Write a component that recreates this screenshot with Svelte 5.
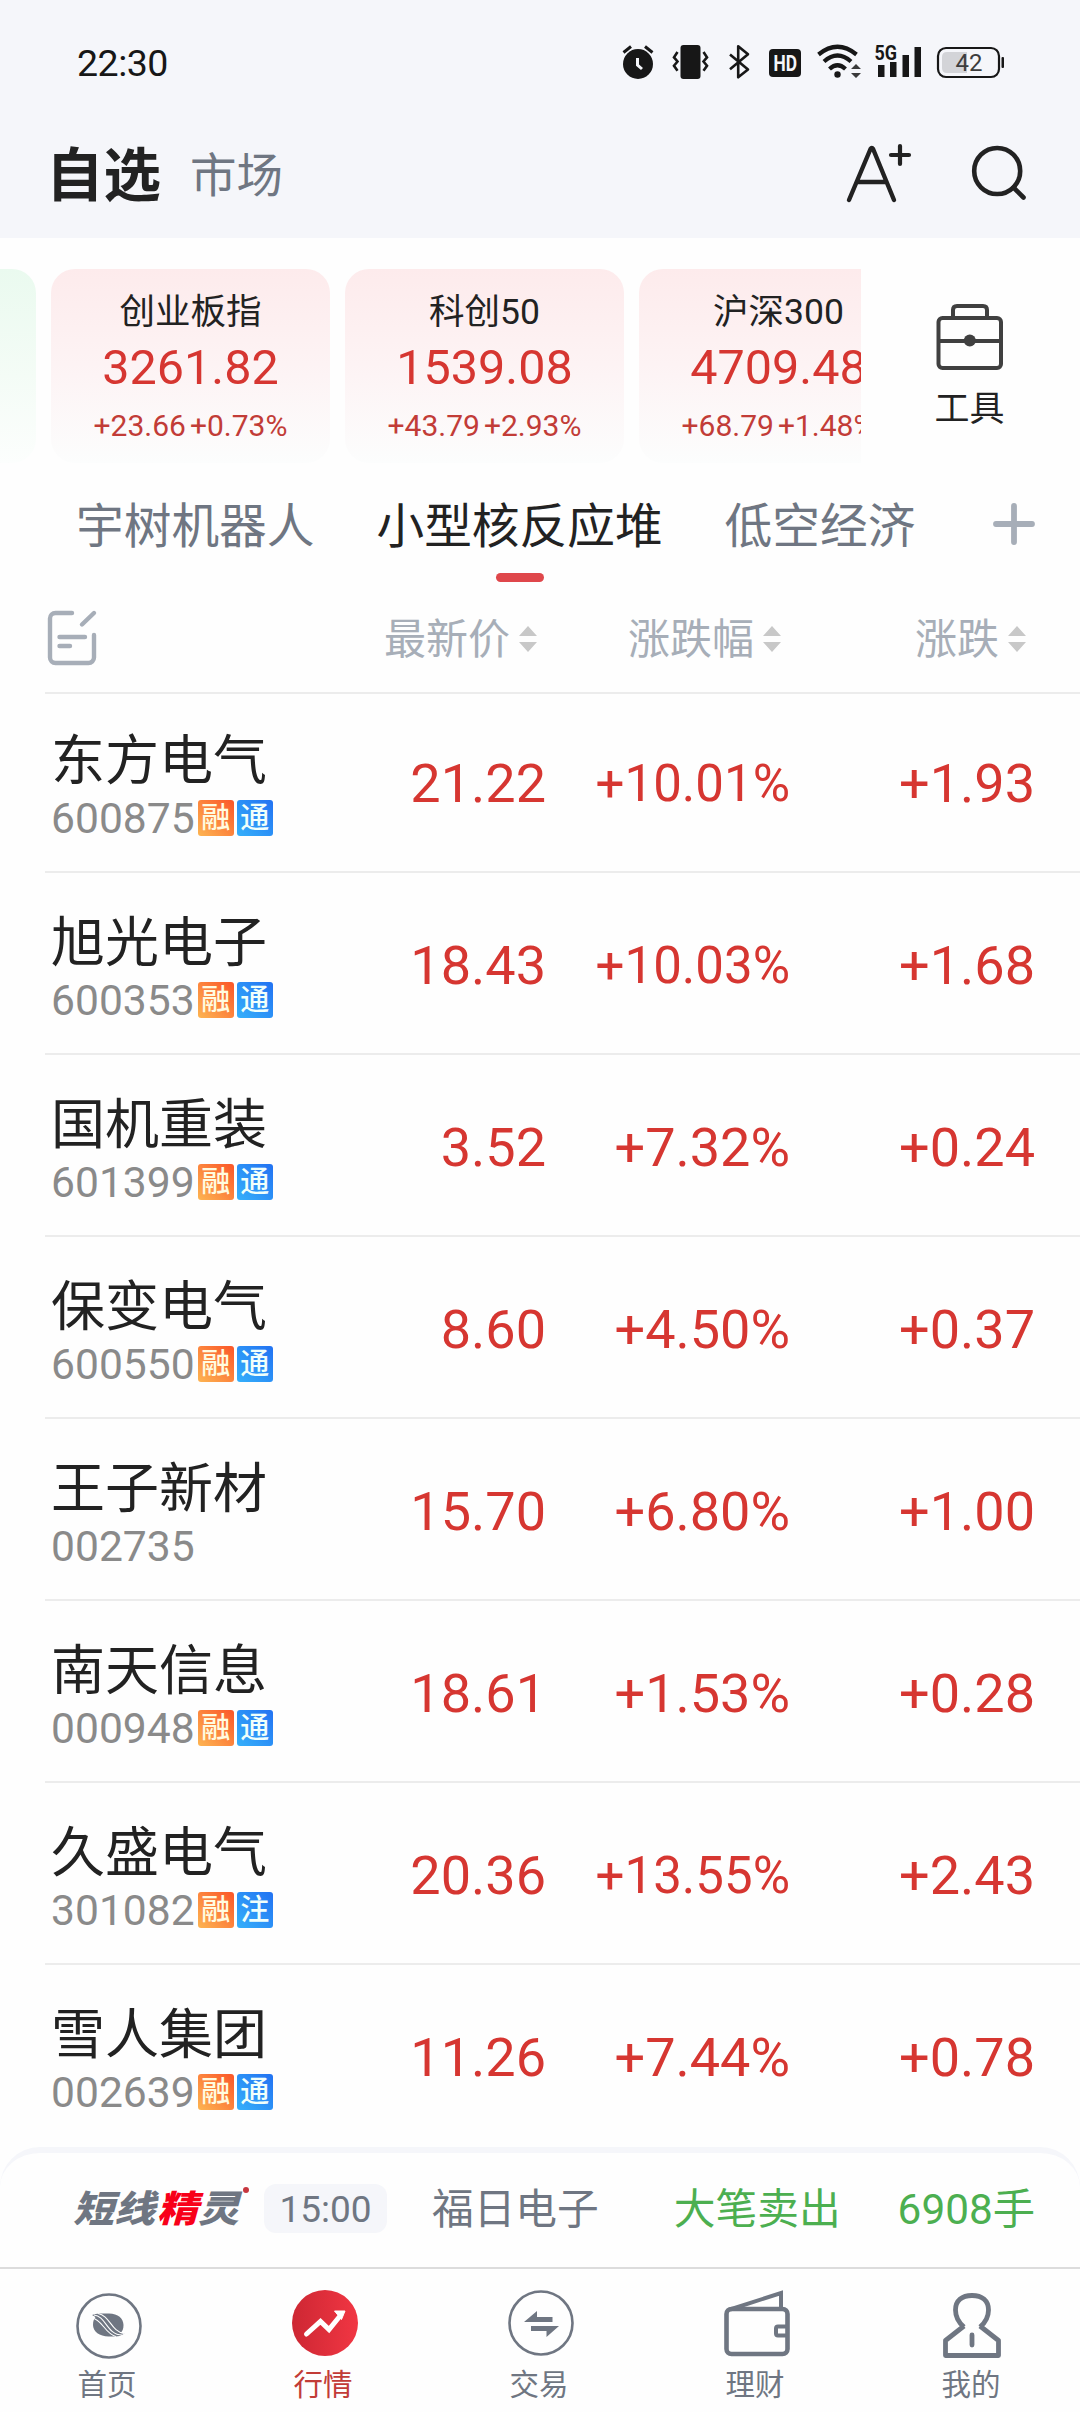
<script lang="ts">
    const indices = [
        { name: "创业板指", value: "3261.82", diff: "+23.66", rate: "+0.73%" },
        { name: "科创50", value: "1539.08", diff: "+43.79", rate: "+2.93%" },
        { name: "沪深300", value: "4709.48", diff: "+68.79", rate: "+1.48%" },
    ]

    const columns = ["最新价", "涨跌幅", "涨跌"]

    const stocks = [
        { name: "东方电气", code: "600875", tags: ["融", "通"], price: "21.22", rate: "+10.01%", diff: "+1.93" },
        { name: "旭光电子", code: "600353", tags: ["融", "通"], price: "18.43", rate: "+10.03%", diff: "+1.68" },
        { name: "国机重装", code: "601399", tags: ["融", "通"], price: "3.52", rate: "+7.32%", diff: "+0.24" },
        { name: "保变电气", code: "600550", tags: ["融", "通"], price: "8.60", rate: "+4.50%", diff: "+0.37" },
        { name: "王子新材", code: "002735", tags: [], price: "15.70", rate: "+6.80%", diff: "+1.00" },
        { name: "南天信息", code: "000948", tags: ["融", "通"], price: "18.61", rate: "+1.53%", diff: "+0.28" },
        { name: "久盛电气", code: "301082", tags: ["融", "注"], price: "20.36", rate: "+13.55%", diff: "+2.43" },
        { name: "雪人集团", code: "002639", tags: ["融", "通"], price: "11.26", rate: "+7.44%", diff: "+0.78" },
    ]

    const groups = ["宇树机器人", "小型核反应堆", "低空经济"]
    let group = groups[1]
</script>

<div class="page">
    <div class="top">
        <div class="status">
            <span class="clock">22:30</span>
            <div class="status-icons">
                <svg width="35" height="36" viewBox="622 44 35 36">
                    <circle cx="638" cy="64" r="15" fill="#171717"/>
                    <path d="M623.5 52.5l7.5-6M652.5 52.5l-7.5-6" stroke="#171717" stroke-width="3" fill="none"/>
                    <path d="M637.5 58v7l4.5 4" stroke="#f5f6fa" stroke-width="3" fill="none"/>
                </svg>
                <svg width="44" height="36" viewBox="669 44 44 36">
                    <rect x="680.5" y="45" width="20" height="34" rx="3" fill="#171717"/>
                    <path d="M677.5 52l-3.5 5.3 3.5 4.2-3.5 4.2 3.5 5M703.5 52l3.5 5.3-3.5 4.2 3.5 4.2-3.5 5" stroke="#171717" stroke-width="2.6" fill="none"/>
                </svg>
                <svg width="28" height="36" viewBox="725 44 28 36">
                    <path d="M730 54.5l18 15-9.8 7.8v-31l9.8 8-18 15" stroke="#171717" stroke-width="2.6" fill="none" stroke-linejoin="round"/>
                </svg>
                <svg width="38" height="36" viewBox="765 44 38 36">
                    <rect x="769" y="49" width="32" height="28" rx="4" fill="#171717"/>
                    <text x="773.5" y="71" font-size="21.5" font-weight="700" fill="#f5f6fa" textLength="23.5" lengthAdjust="spacingAndGlyphs">HD</text>
                </svg>
                <svg width="47" height="36" viewBox="815 44 47 36">
                    <g stroke="#171717" stroke-width="4.2" fill="none">
                        <path d="M818.5 54.5q19-15.500 38 0"/>
                        <path d="M824 61.5q13.5-12 27 0"/>
                        <path d="M829.5 69q8-7.500 16 0"/>
                    </g>
                    <circle cx="837.5" cy="74.5" r="3.2" fill="#171717"/>
                    <path d="M851 69l5-5 5 5zM851 73h10l-5 5z" fill="#3a3a3a"/>
                </svg>
                <svg width="48" height="36" viewBox="874 44 48 36">
                    <text x="874.5" y="60" font-size="20.5" font-weight="700" fill="#171717" textLength="22.5" lengthAdjust="spacingAndGlyphs">5G</text>
                    <path d="M878 65h6.5v12h-6.500zM890 62h6.5v15h-6.500zM902.5 55h6.5v22h-6.500zM914.5 47h6.5v30h-6.500z" fill="#171717"/>
                </svg>
                <svg width="71" height="36" viewBox="934 44 71 36">
                    <rect x="938" y="48" width="61" height="29" rx="8" fill="none" stroke="#171717" stroke-width="2.2"/>
                    <path d="M967 52h-20q-5 0-5 5v11q0 5 5 5h20z" fill="#d3d4d8"/>
                    <rect x="1001.5" y="57" width="2.5" height="11" rx="1" fill="#171717"/>
                    <text x="955.5" y="71" font-size="24" fill="#3d3d3d">42</text>
                </svg>
            </div>
        </div>
        <div class="header">
            <span class="title">自选</span>
            <span class="subtitle">市场</span>
            <div class="actions">
                <svg width="70" height="66" viewBox="844 140 70 66">
                    <path d="M849 200l21.5-51q1.3-2 2.6 0L894 200M857.5 182h28.5" fill="none" stroke="#222" stroke-width="4.4" stroke-linecap="round" stroke-linejoin="round"/>
                    <path d="M900 146v18M891 155h18" stroke="#222" stroke-width="4.2" stroke-linecap="round"/>
                </svg>
                <svg width="60" height="66" viewBox="968 140 60 66">
                    <circle cx="997.2" cy="171" r="23" fill="none" stroke="#222" stroke-width="4.6"/>
                    <path d="M1013.5 187.5l10 10" stroke="#222" stroke-width="4.6" stroke-linecap="round"/>
                </svg>
            </div>
        </div>
    </div>

    <div class="overview">
        <div class="strip">
            <div class="card down"></div>
            {#each indices as item}
                <div class="card">
                    <div class="card-name">{item.name}</div>
                    <div class="card-value">{item.value}</div>
                    <div class="card-diff"><span>{item.diff}</span><span>{item.rate}</span></div>
                </div>
            {/each}
        </div>
        <div class="tools">
            <svg width="70" height="70" viewBox="934 302 70 70" fill="none" stroke="#404040" stroke-width="4">
                <rect x="937.5" y="318" width="62.5" height="50" rx="4"/>
                <path d="M952 317v-7q0-4 4-4h26q4 0 4 4v7M938 341h62"/>
                <circle cx="968.800" cy="340.5" r="6" fill="#404040" stroke="none"/>
            </svg>
            <span>工具</span>
        </div>
    </div>

    <div class="groups">
        {#each groups as g}
            <div class="group" class:active={g == group}>
                <span>{g}</span>
                {#if g == group}<i></i>{/if}
            </div>
        {/each}
        <svg class="add" width="42" height="60" viewBox="0 0 42 60">
            <path d="M3 27h36M21 9v36" stroke="#a7aeb8" stroke-width="5.8" stroke-linecap="round"/>
        </svg>
    </div>

    <div class="columns">
        <svg width="52" height="60" viewBox="46 608 52 60" fill="none" stroke="#a7aeb8" stroke-width="4.4" stroke-linecap="round">
            <path d="M72 613H55.5a5.5 5.5 0 0 0-5.500 5.5v39a5.5 5.5 0 0 0 5.5 5.5h33a5.5 5.5 0 0 0 5.5-5.500V635"/>
            <path d="M82 624.5l12-11.500M59.5 637h25.5M59.5 646h10.5"/>
        </svg>
        {#each columns as c}
            <div class="column">
                <span>{c}</span>
                <svg width="18" height="26" viewBox="0 0 18 26"><path d="M0 10l9-10 9 10zM0 16h18l-9 10z" fill="#c8c8c8"/></svg>
            </div>
        {/each}
    </div>

    <div class="list">
        {#each stocks as s}
            <div class="stock">
                <div class="info">
                    <div class="name">{s.name}</div>
                    <div class="code">
                        <span>{s.code}</span>
                        {#each s.tags as tag}
                            <span class="tag" class:margin={tag == "融"}>{tag}</span>
                        {/each}
                    </div>
                </div>
                <div class="num">{s.price}</div>
                <div class="num" class:long={s.rate.length > 6}>{s.rate}</div>
                <div class="num">{s.diff}</div>
            </div>
        {/each}
    </div>

    <div class="ticker">
        <span class="logo">短线<b>精</b>灵</span>
        <i class="dot"></i>
        <span class="time">15:00</span>
        <span class="who">福日电子</span>
        <span class="what">大笔卖出</span>
        <span class="amount">6908手</span>
    </div>

    <div class="nav">
        <div class="nav-item">
            <svg width="72" height="72" viewBox="0 0 72 72">
                <circle cx="37" cy="38" r="31.5" fill="none" stroke="#6f7682" stroke-width="2.6"/>
                <path d="M20 27q3-1.500 8-1.500h9c9 0 14.5 5 14.5 11.5 0 4-1 6-3 8l4 .5q-4 3-9 3h-7c-9 0-15.500-5-15.500-11.500 0-4 1-6 2.5-8z" fill="#6f7682"/>
                <path d="M22 27c12 1 13 20 28 20M26 25.5c12 2 13 18 26 20M20 30c10 1 13 16 24 18.5" fill="none" stroke="#fff" stroke-width="1.1"/>
            </svg>
            <span>首页</span>
        </div>
        <div class="nav-item active">
            <svg width="72" height="72" viewBox="0 0 72 72">
                <defs>
                    <linearGradient id="quote"><stop offset="0" stop-color="#cd2733"/><stop offset="1" stop-color="#f13643"/></linearGradient>
                </defs>
                <circle cx="37" cy="35" r="33" fill="url(#quote)"/>
                <path d="M18.5 46L32.5 33.5l8.5 8 11-13.500" fill="none" stroke="#fff" stroke-width="5" stroke-linecap="round"/>
                <path d="M46.5 23h10.5l-3.500 8.5z" fill="#fff" stroke="#fff" stroke-linejoin="round"/>
            </svg>
            <span>行情</span>
        </div>
        <div class="nav-item">
            <svg width="72" height="72" viewBox="0 0 72 72">
                <circle cx="37" cy="35" r="31.5" fill="none" stroke="#6f7682" stroke-width="2.6"/>
                <path d="M20 34l13-11v6h15.5v5zM27 38h28l-12.500 11v-6H27z" fill="#6f7682"/>
            </svg>
            <span>交易</span>
        </div>
        <div class="nav-item">
            <svg width="72" height="72" viewBox="0 0 72 72" fill="none" stroke="#6f7682" stroke-width="4.6">
                <rect x="6.5" y="21" width="61" height="45" rx="5"/>
                <path d="M10 21.5L61 5v15" stroke-width="4"/>
                <path d="M67 38.5h-9q-2 0-2 2v5q0 2 2 2h9" stroke-width="4"/>
            </svg>
            <span>理财</span>
        </div>
        <div class="nav-item">
            <svg width="72" height="72" viewBox="0 0 72 72" fill="none" stroke="#6f7682" stroke-width="4.8" stroke-linejoin="round">
                <path d="M28 39c-6-5-8.500-11-8.500-17 0-9.500 6.5-14.500 16.5-14.500s16.5 5 16.5 14.5c0 6-2.500 12-8.500 17M28 38L9.5 52.5v15h53v-15L44 38"/>
                <path d="M36 47v10" stroke-linecap="round"/>
            </svg>
            <span>我的</span>
        </div>
    </div>
</div>

<style>
    :global(body) {
        margin: 0;
        background: #fff;
    }
    .page {
        width: 1080px;
        height: 2412px;
        overflow: hidden;
        display: flex;
        flex-direction: column;
        background: #fefefe;
        color: #222;
        font-family: Roboto, "Noto Sans CJK SC", sans-serif;
    }
    svg {
        display: block;
        flex: none;
        overflow: visible;
    }

    .top {
        height: 238px;
        background: #f5f6fa;
    }
    .status {
        height: 96px;
        padding: 14px 75px 0 77px;
        display: flex;
        justify-content: space-between;
        align-items: center;
    }
    .clock {
        padding-top: 2px;
        font-size: 37.5px;
        line-height: 44px;
        letter-spacing: -0.5px;
        color: #171717;
    }
    .status-icons {
        display: flex;
        gap: 12px;
    }
    .header {
        height: 126px;
        display: flex;
        align-items: center;
        padding: 0 52px 0 46px;
    }
    .title {
        font-size: 57.5px;
        line-height: 64px;
        font-weight: 700;
        padding-top: 7px;
    }
    .subtitle {
        margin-left: 29px;
        padding-top: 6px;
        font-size: 46.5px;
        line-height: 60px;
        color: #6f7682;
    }
    .actions {
        margin-left: auto;
        display: flex;
        gap: 54px;
    }

    .overview {
        display: flex;
        padding-top: 31px;
        height: 194px;
    }
    .strip {
        width: 861px;
        display: flex;
        gap: 15px;
        overflow: hidden;
    }
    .card {
        flex: none;
        box-sizing: border-box;
        width: 279px;
        height: 194px;
        padding-top: 21px;
        border-radius: 24px;
        background: linear-gradient(#fdebec, #fdf4f5 55%, #fcfdfd);
        text-align: center;
    }
    .card.down {
        margin-left: -243px;
        background: linear-gradient(#eafaef, #f4fcf6 55%, #fcfefd);
    }
    .card-name {
        font-size: 35.5px;
        line-height: 44px;
    }
    .card-value {
        margin-top: 4px;
        font-size: 48.5px;
        line-height: 60px;
        color: #d63631;
    }
    .card-diff {
        margin-top: 8px;
        display: flex;
        justify-content: center;
        gap: 4px;
        font-size: 30px;
        line-height: 40px;
        color: #c23c37;
    }
    .tools {
        width: 217px;
        display: flex;
        flex-direction: column;
        align-items: center;
        padding-top: 33px;
        font-size: 35px;
        line-height: 40px;
    }
    .tools span {
        margin-top: 18px;
    }

    .groups {
        display: flex;
        gap: 62px;
        height: 85px;
        padding: 34px 45px 0 76px;
        font-size: 47.7px;
        line-height: 60px;
        color: #6f7682;
    }
    .group {
        display: flex;
        flex-direction: column;
        align-items: center;
        white-space: nowrap;
    }
    .group.active {
        color: #222;
    }
    .group i {
        width: 48px;
        height: 9px;
        margin-top: 16px;
        border-radius: 5px;
        background: #df474b;
    }
    .add {
        margin-left: auto;
    }

    .columns,
    .stock {
        display: grid;
        grid-template-columns: 1fr 246px 244px 245px;
        box-sizing: border-box;
        margin-left: 45px;
        padding-right: 45px;
    }
    .columns {
        position: relative;
        height: 112px;
        padding-left: 1px;
        align-items: center;
        background: #fefefe;
        border-bottom: 2px solid #ececec;
        font-size: 42px;
        line-height: 50px;
        color: #a7aeb8;
    }
    .columns > svg {
        margin-top: 2px;
    }
    .column {
        display: flex;
        justify-content: flex-end;
        align-items: center;
        gap: 9px;
        padding: 4px 9px 0 0;
        white-space: nowrap;
    }
    .column span {
        padding-top: 2px;
    }
    /* the list is scrolled slightly under the column header */
    .list {
        margin-top: -3px;
    }
    .stock {
        height: 182px;
        border-bottom: 2px solid #ececec;
    }
    .stock:last-child {
        border-bottom-color: transparent;
    }
    .info {
        padding: 39px 0 0 6px;
    }
    .name {
        font-size: 54px;
        line-height: 64px;
        white-space: nowrap;
    }
    .code {
        display: flex;
        align-items: center;
        gap: 3px;
        margin-top: 2px;
        font-size: 42.6px;
        line-height: 44px;
        color: #8a8a8a;
    }
    .tag {
        width: 36px;
        height: 36px;
        border-radius: 3px;
        background: linear-gradient(45deg, #35b0fb, #2272f2);
        font-size: 29px;
        font-weight: 500;
        line-height: 37px;
        text-align: center;
        color: #f0fffb;
    }
    .tag.margin {
        background: linear-gradient(45deg, #fdb552, #fb5528);
        color: #fffbe0;
    }
    .num {
        padding-top: 63px;
        font-size: 54px;
        line-height: 60px;
        text-align: right;
        color: #d63631;
    }
    .long {
        font-size: 51px;
    }

    .ticker {
        position: relative;
        box-sizing: border-box;
        flex: none;
        height: 122px;
        padding: 0 45px 4px 73px;
        display: flex;
        align-items: center;
        border-top: 6px solid #f5f6fa;
        border-bottom: 2px solid #dcdcdc;
        border-radius: 40px 40px 0 0;
        font-size: 41.7px;
        line-height: 50px;
        color: #6f7682;
        white-space: nowrap;
    }
    .logo {
        padding-top: 3px;
        font-size: 41px;
        font-weight: 900;
        font-style: italic;
        transform: scaleY(0.9);
    }
    .logo b {
        margin-left: 2px;
        font-weight: 900;
        color: #f80019;
    }
    .dot {
        width: 6px;
        height: 6px;
        margin: 0 15px 36px 4px;
        border-radius: 50%;
        background: #c7373f;
    }
    .time {
        width: 123px;
        height: 49px;
        border-radius: 12px;
        background: #f5f6fa;
        font-size: 37px;
        line-height: 51px;
        text-align: center;
    }
    .who {
        margin-left: 45px;
        padding-top: 3px;
    }
    .what {
        margin-left: auto;
        padding-top: 3px;
        color: #4caf50;
    }
    .amount {
        margin-left: 57px;
        padding-top: 3px;
        font-size: 42.3px;
        color: #4caf50;
    }

    .nav {
        display: grid;
        grid-template-columns: repeat(5, 1fr);
        padding-top: 19px;
    }
    .nav-item {
        display: flex;
        flex-direction: column;
        align-items: center;
        gap: 7px;
        font-size: 29.5px;
        line-height: 36px;
        color: #6f7682;
    }
    .nav-item span {
        margin-left: -2px;
    }
    .nav-item.active {
        color: #c23c37;
    }
</style>
